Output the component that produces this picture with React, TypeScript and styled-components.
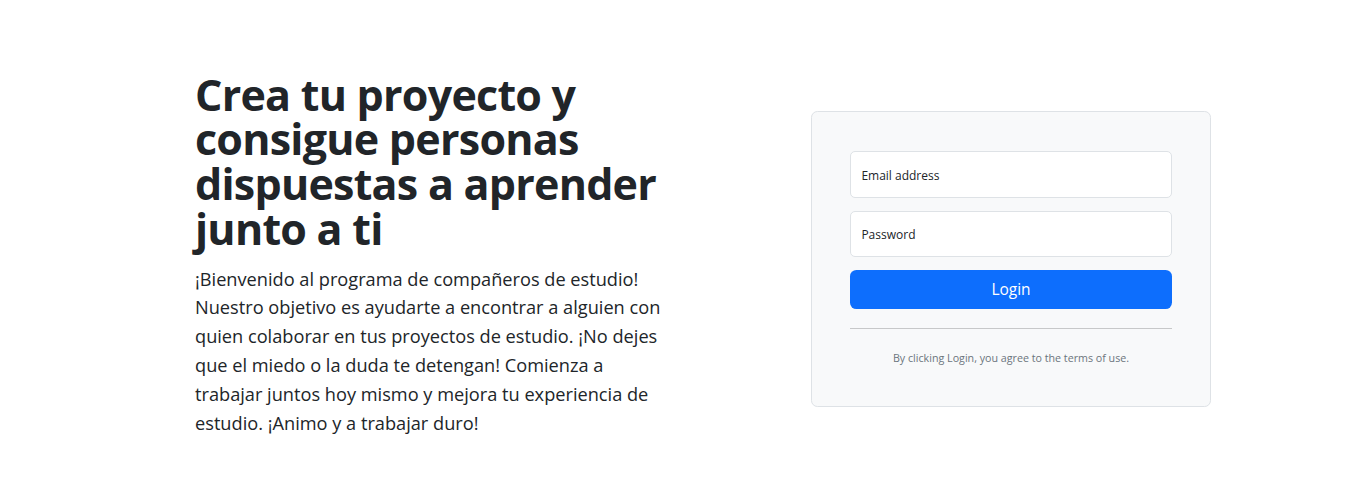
import React from "react";
import styled, { createGlobalStyle } from "styled-components";

const Global = createGlobalStyle`
  html, body { margin: 0; padding: 0; background: #fff; }
  body {
    font-family: "Open Sans", "Noto Sans", "Liberation Sans", sans-serif;
    color: #212529;
    -webkit-font-smoothing: antialiased;
  }
  * { box-sizing: border-box; }
`;

const Page = styled.div`
  height: 478px;
  display: flex;
  align-items: center;
  padding-top: 40px;
`;

const Row = styled.div`
  width: 1058px;
  margin: 0 auto;
  display: flex;
  align-items: center;
`;

const Intro = styled.div`
  flex: 1;
  padding: 0 0 8px 42px;
`;

const Title = styled.h1`
  margin: 0 0 12.8px;
  width: 480px;
  font-size: 43px;
  line-height: 44.8px;
  font-weight: 700;
  letter-spacing: -0.75px;
  color: #212529;
`;

const Lead = styled.p`
  margin: 0;
  white-space: nowrap;
  font-size: 18.2px;
  line-height: 28.8px;
  font-weight: 400;
  color: #212529;
`;

const Card = styled.form`
  width: 400px;
  padding: 39px 38.4px 38.4px;
  background: #f8f9fa;
  border: 1px solid #dee2e6;
  border-radius: 6.4px;
  display: flex;
  flex-direction: column;
`;

const Field = styled.div`
  height: 46.4px;
  margin-bottom: 13px;
  background: #fff;
  border: 1px solid #dee2e6;
  border-radius: 5px;
  display: flex;
  align-items: center;
  padding: 2px 10px 0;
  font-size: 12px;
  color: #212529;
`;

const Button = styled.button`
  height: 39px;
  border: 0;
  border-radius: 6.4px;
  background: #0d6efd;
  color: #fff;
  font-family: inherit;
  font-size: 15.5px;
  font-weight: 400;
  padding: 0;
  cursor: pointer;
`;

const Rule = styled.hr`
  margin: 19.5px 0 20px;
  border: 0;
  border-top: 1px solid #c7c8c9;
`;

const Note = styled.small`
  display: block;
  text-align: center;
  font-size: 10.7px;
  line-height: 18px;
  color: #6c757d;
`;

export default function App() {
  return (
    <>
      <Global />
      <Page>
        <Row>
          <Intro>
            <Title>Crea tu proyecto y consigue personas dispuestas a aprender junto a ti</Title>
            <Lead>
              ¡Bienvenido al programa de compañeros de estudio!
              <br />
              Nuestro objetivo es ayudarte a encontrar a alguien con
              <br />
              quien colaborar en tus proyectos de estudio. ¡No dejes
              <br />
              que el miedo o la duda te detengan! Comienza a
              <br />
              trabajar juntos hoy mismo y mejora tu experiencia de
              <br />
              estudio. ¡Animo y a trabajar duro!
            </Lead>
          </Intro>
          <Card onSubmit={(e) => e.preventDefault()}>
            <Field>Email address</Field>
            <Field>Password</Field>
            <Button type="submit">Login</Button>
            <Rule />
            <Note>By clicking Login, you agree to the terms of use.</Note>
          </Card>
        </Row>
      </Page>
    </>
  );
}
